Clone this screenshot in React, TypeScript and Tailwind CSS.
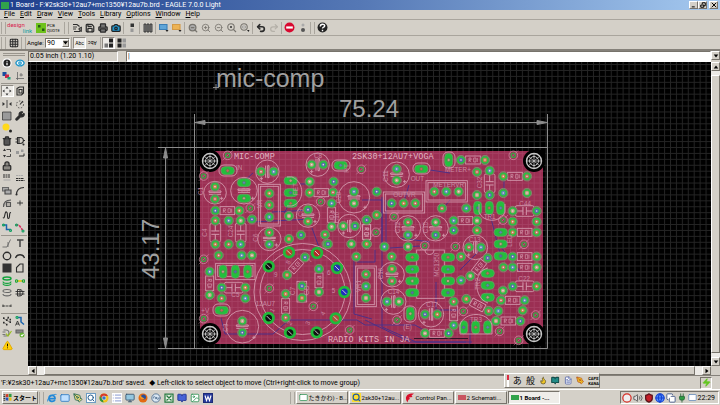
import type { ReactNode } from 'react';
import {
  Info, Eye, Trash2, Lock, Wrench, ZoomIn, ZoomOut, Search, Undo2, Redo2, Save, Printer,
  Grid3x3, Copy, TriangleAlert, Zap, Globe, Mail, FileText, Image, Disc3, List, Monitor, Camera,
  Ban, Shield, Volume2, Plug, PenTool, BookOpen, Flame,
} from 'lucide-react';

const RAISED = 'border border-t-white border-l-white border-r-[#77736b] border-b-[#77736b] bg-[#d4d0c8]';
const SUNKEN = 'border border-t-[#77736b] border-l-[#77736b] border-r-white border-b-white';

/* ---------- toolbar parts ---------- */

function Sep({ wide = false }: { wide?: boolean }) {
  return (
    <span className={wide ? 'flex w-[7px] shrink-0 justify-center gap-[3px]' : 'flex w-[3px] shrink-0 justify-center'}>
      <span className="h-3 w-px bg-[#aaa69e]" />
      {wide && <span className="h-3 w-px bg-[#aaa69e]" />}
    </span>
  );
}

function Tool({ label, pressed = false, children }: { label: string; pressed?: boolean; children: ReactNode }) {
  return (
    <button
      type="button"
      aria-label={label}
      className={`flex h-3 w-[13px] shrink-0 items-center justify-center ${pressed ? 'border border-[#8f8b84] border-r-white border-b-white bg-[#eceae6]' : ''}`}
    >
      {children}
    </button>
  );
}

function G({ children, size = 'size-[10px]' }: { children: ReactNode; size?: string }) {
  return (
    <svg viewBox="0 0 20 20" className={size} fill="none" stroke="#2c2c2c" strokeWidth="2.2">
      {children}
    </svg>
  );
}

const ic = 'size-[10px] text-[#2c2c2c]';
const dim = 'size-[10px] text-[#77746e]';

/* ---------- palette ---------- */

type Entry = [string, ReactNode, boolean?];

const paletteA: Entry[] = [
  ['Info', <Info className="size-[10px] fill-[#222] text-white" strokeWidth={3} />],
  ['Show', <Eye className="size-[10px] fill-white text-[#2196c9]" strokeWidth={3} />],
  ['Display', <G><path d="M1 2h8v8H1z" fill="#194fa0" stroke="none" /><path d="M6 7h8v7H6z" fill="#cc2448" stroke="none" /><path d="M11 12h6v5h-6z" fill="#1ba07a" stroke="none" /></G>],
  ['Mark', <G><path d="M5 2v16M2 15h16M12 4v7M9 8h7" stroke="#666" strokeWidth="1.6" /></G>],
];

const paletteB: Entry[] = [
  ['Move', <G><path d="M10 1l3 4H7zM10 19l3-4H7zM1 10l4-3v6zM19 10l-4-3v6z" fill="#333" stroke="none" /></G>, true],
  ['Copy', <G><path d="M4 5l5-3h8v12l-4 4H4zM8 7h6v7H8z" /></G>],
  ['Mirror', <G><path d="M10 2v16" strokeWidth="1.6" /><path d="M1 6l5 4-5 4zM19 6l-5 4 5 4z" fill="#333" stroke="none" /></G>],
  ['Rotate', <G><circle cx="10" cy="11" r="7" strokeDasharray="3 3" strokeWidth="1.5" /><path d="M10 11l6-7" /></G>],
  ['Group', <G><path d="M1 2h17v16H1z" fill="#9a9a9a" strokeWidth="1.4" /></G>],
  ['Change', <Wrench className="size-[10px] fill-[#2c2c2c] text-[#2c2c2c]" strokeWidth={3} />],
  ['Cut', <G><circle cx="8" cy="8" r="7" fill="#ffd91a" stroke="none" /><circle cx="17" cy="16" r="3" fill="#222" stroke="none" /></G>],
  ['', null],
  ['Delete', <Trash2 className="size-[10px] fill-[#555] text-[#2c2c2c]" strokeWidth={3} />],
  ['Add', <G><path d="M5 3h5c9 0 9 12 0 12H5zM1 6h4M1 12h4M17 9h3M8 3v12" /><circle cx="17" cy="17" r="1" /></G>],
  ['Pinswap', <G><path d="M9 3h8v5M9 17h8v-5" strokeWidth="1.6" /><path d="M5 1l3 5H2zM5 19l3-5H2z" fill="#333" stroke="none" /></G>],
  ['Replace', <G><path d="M2 6h6v6H2zM12 3h5v5h-5z" fill="#999" stroke="none" /><path d="M8 16h10v-5" strokeWidth="2" /></G>],
  ['Lock', <Lock className="size-[10px] fill-[#8b8983] text-[#2c2c2c]" strokeWidth={3} />],
  ['', null],
  ['Name', <G><path d="M2 4h15M2 8h15" strokeDasharray="4 1" /><path d="M3 14h14" stroke="#aaa" /></G>],
  ['Value', <G><path d="M2 5h14" stroke="#aaa" strokeDasharray="4 1" /><path d="M2 11h16M2 15h17" strokeDasharray="4 1" /></G>],
  ['Smash', <G><path d="M1 3h12v7H1z" fill="#aaa" stroke="#666" /><path d="M6 8h12v8H6z" fill="#aaa" stroke="#444" /></G>],
  ['Miter', <G><path d="M3 18C3 8 8 3 18 3" /><circle cx="3" cy="17" r="1" /></G>],
  ['Split', <G><path d="M3 18C3 8 8 4 18 4M9 17V9h8v8z" fill="#b5b1aa" stroke="#555" /></G>],
  ['Optimize', <G><path d="M4 10h12M10 5v10" strokeWidth="1.8" /></G>],
  ['Meander', <G><path d="M2 15C6 20 5 2 9 4s0 13 4 13 0-13 5-12" /></G>],
  ['', null],
  ['Route', <G><path d="M2 4h7v9h9" stroke="#1b64ad" strokeWidth="3" /><circle cx="3" cy="4" r="2" stroke="#12a060" /><circle cx="17" cy="15" r="2" stroke="#12a060" /></G>],
  ['Ripup', <G><path d="M2 4h6l7 10" stroke="#d8245a" strokeWidth="3" strokeDasharray="5 2" /><circle cx="3" cy="4" r="2" stroke="#12a060" /><circle cx="16" cy="16" r="2" stroke="#12a060" /></G>],
];

const paletteC: Entry[] = [
  ['Wire', <G><path d="M1 18h9l7-15M12 18V8" stroke="#666" strokeWidth="1.7" /></G>],
  ['Text', <G><path d="M4 4h13M10 4v14" stroke="#444" strokeWidth="3" /></G>],
  ['Circle', <G><circle cx="10" cy="10" r="7.5" strokeWidth="2.6" /></G>],
  ['Arc', <G><path d="M1 14c3-9 15-9 18 0" strokeWidth="3" /></G>],
  ['Rect', <G><path d="M1 1h18v18H1z" fill="#333" stroke="none" /></G>],
  ['Polygon', <G><path d="M3 18V9l7-7h6v16z" /></G>],
  ['Via', <G><ellipse cx="10" cy="5" rx="8" ry="3" stroke="#14a33d" strokeWidth="3" /><path d="M2 11c0 5 16 5 16 0M2 15c0 5 16 5 16 0" stroke="#14a33d" /></G>],
  ['Signal', <G><path d="M3 10h14" stroke="#e5c500" strokeWidth="3" /><circle cx="3" cy="10" r="2.5" stroke="#14a33d" /><circle cx="17" cy="10" r="2.5" stroke="#14a33d" /></G>],
  ['Hole', <G><ellipse cx="10" cy="6" rx="8" ry="3" stroke="#666" /><path d="M2 12c0 5 16 5 16 0" stroke="#666" /></G>],
  ['Attribute', <G><path d="M5 3h4c9 0 9 13 0 13H5zM1 7h18M1 12h18M10 3v13" strokeWidth="1.8" /></G>],
  ['Dimension', <G><path d="M1 10h18M2 7v6M18 7v6" strokeWidth="1.7" strokeDasharray="5 1" /></G>],
  ['', null],
];

const paletteD: Entry[] = [
  ['Ratsnest', <G><path d="M2 4h3M11 3h3M8 8h3M2 13h3M15 12h3M8 17h3M15 7h3" strokeWidth="3.5" /><path d="M4 5l5 4M12 4l-3 5M10 9l6 3M4 13l5 4" strokeWidth="1" /></G>],
  ['Autorouter', <G><path d="M6 3h6v9l6 5" stroke="#1b64ad" strokeWidth="3" /><circle cx="4" cy="3" r="2" stroke="#12a060" /><path d="M1 19l4-9 4 9M2 16h6" strokeWidth="1.7" /></G>],
  ['ERC', <G><path d="M3 4h5c8 0 8 12 0 12H3M1 8h6M1 13h6" stroke="#777" /><path d="M8 11l4 5 7-10" stroke="#9ac21c" /></G>],
  ['DRC', <G><path d="M2 4h14v6H2z" fill="#888" stroke="#666" /><circle cx="14" cy="14" r="5" fill="#64b333" stroke="none" /><path d="M12 14l2 2 3-4" stroke="#fff" /></G>],
  ['Errors', <TriangleAlert className="size-[11px] fill-[#ffcf08] text-[#e2a900] [&>path:not(:first-child)]:stroke-black" strokeWidth={2} />],
];

function PaletteGroup({ entries, height }: { entries: Entry[]; height: string }) {
  return (
    <div className={`grid auto-rows-fr grid-cols-2 items-center justify-items-center pr-px ${height}`}>
      {entries.map(([label, icon, on], i) =>
        label ? <Tool key={i} label={label} pressed={on}>{icon}</Tool> : <span key={i} />,
      )}
    </div>
  );
}

/* ---------- board drawing ---------- */

type P = [number, number];
type Quad = {
  at: P;
  pads: P[];
  vias: P[];
  wide: P[];
  tall: P[];
  caps: [number, number, number, boolean][];
  parts: [number, number, number][];
  film: [number, number, number][];
  boxes: [number, number, number, number][];
  labels: [number, number, string, number?][];
};

const quads: Quad[] = [
  {
    at: [190, 140],
    pads: [[213,95],[251,95],[365,74],[400,74],[75,140],[75,177],[492,155],[492,190],[354,209],[354,244],[238,278],[238,313],[460,258],[495,258],[238,160],[238,195],[238,231],[359,125],[431,125],[359,158],[429,157],[425,190],[425,260],[76,212],[148,212],[76,242],[116,242],[152,242],[186,238],[76,313],[116,313],[152,313],[297,228],[333,285],[297,297],[405,284],[410,312],[484,312],[530,240],[530,312]],
    vias: [[113,46],[41,108],[514,88],[392,185],[181,204]],
    wide: [[113,92],[452,76],[302,122],[302,158],[302,190],[162,128],[162,175]],
    tall: [],
    caps: [[232,95,35,true],[383,74,35,true],[75,158,34,false],[162,152,40,false],[492,172,47,false],[354,227,35,false],[238,297,35,false],[478,258,35,true]],
    parts: [[394,158,0],[425,225,90],[112,212,0],[530,276,90]],
    film: [[76,278,90],[152,278,90]],
    boxes: [[205,133,66,125],[211,139,54,113]],
    labels: [[138,90,'IN'],[40,165,'C1',-90],[154,160,'C2'],[216,205,'VR',-90],[325,165,'FET',-90],[454,190,'C20',-90],[372,54,'C8'],[478,98,'HT',-90],[338,230,'C9',-90],[50,290,'C4',-90],[128,292,'C24',-90],[205,305,'C6',-90],[448,250,'C10',-90]],
  },
  {
    at: [190, 240],
    pads: [[86,46],[155,46],[186,46],[345,52],[291,105],[499,50],[59,95],[59,165],[95,143],[166,143],[95,175],[166,175],[157,243],[157,278],[287,162],[287,233],[387,87],[387,156],[336,138],[336,174],[528,103],[528,139],[528,174],[414,12]],
    vias: [[238,145],[370,199],[479,270],[41,58],[41,236]],
    wide: [[95,211]],
    tall: [[99,95],[136,95],[173,95]],
    caps: [[157,260,49,false]],
    parts: [[59,130,90],[318,78,-48],[287,198,90],[387,121,90]],
    film: [[131,143,0]],
    boxes: [[77,70,118,49],[83,76,106,33],[321,124,29,62],[497,78,62,122],[503,84,50,110]],
    labels: [[197,197,'12AU7'],[34,220,'+V',0],[115,275,'C3',-90],[252,110,'9'],[298,75,'8',-60],[362,70,'7',-60],[411,105,'6'],[425,160,'5'],[402,228,'4',-60],[356,257,'3',-60],[302,257,'2',-60],[250,218,'1',-60],[314,165,'C7',-90],[358,165,'GD',-90],[514,157,'VR1',-90],[124,172,'C5']],
  },
  {
    at: [365, 140],
    pads: [[208,155],[244,155],[281,155],[80,190],[116,190],[151,190],[95,87],[95,121],[288,60],[360,60],[336,96],[374,92],[336,165],[374,165],[415,109],[486,109],[415,159],[486,159],[35,155],[35,225],[231,205],[304,205],[443,213],[515,213],[443,245],[515,245],[266,242],[336,242],[266,271],[336,271],[129,247],[129,285],[212,247],[212,285],[443,277],[515,277],[58,320],[129,320],[5,240],[5,312],[312,322],[348,322]],
    vias: [[445,46],[87,230],[414,240],[477,313],[271,320],[33,277],[179,317]],
    wide: [[169,87],[407,277],[407,312]],
    tall: [[251,60],[338,204],[373,204],[407,204]],
    caps: [[95,104,38,false],[129,265,38,false],[212,265,38,false],[331,322,37,true]],
    parts: [[324,60,0],[450,109,0],[301,242,0],[479,277,0],[5,276,90]],
    film: [[374,130,90],[479,213,0]],
    boxes: [[183,122,124,64],[189,128,112,52],[55,156,124,63],[61,162,112,51]],
    labels: [[240,97,'METER+'],[205,140,'METERVR'],[85,172,'OUTVR'],[137,123,'OUT'],[356,237,'TR1'],[463,197,'C44'],[70,125,'C11',-90],[104,280,'C12',-90],[190,280,'C15',-90],[312,305,'C13'],[350,145,'C32',-90],[440,320,'LED',-90]],
  },
  {
    at: [365, 240],
    pads: [[288,50],[288,121],[316,108],[368,54],[81,87],[81,123],[66,185],[102,185],[180,223],[217,223],[266,185],[266,256],[180,280],[251,280],[304,177],[371,213],[400,213],[393,243],[466,243],[473,211],[408,181],[479,181],[414,152],[443,139],[515,139],[415,82],[443,82],[515,82],[443,50],[515,50],[80,50]],
    vias: [[295,214],[96,240],[404,274],[461,301],[512,225]],
    wide: [[142,52],[142,88],[142,123],[142,158],[249,52],[249,88],[249,123],[249,158],[368,100],[368,136],[368,172],[407,48]],
    tall: [[136,221],[296,262],[332,262],[368,262]],
    caps: [[81,104,37,false],[85,185,38,true],[198,223,38,true]],
    parts: [[266,220,90],[216,280,0],[342,81,-52],[338,195,28],[430,243,0],[443,181,0],[479,82,0],[479,50,0]],
    film: [[479,139,0]],
    boxes: [[155,30,83,145]],
    labels: [[221,110,'MC1350',-90],[115,268,'(E)'],[68,162,'C14'],[55,118,'C16',-90],[184,200,'C17'],[315,245,'TR3'],[344,150,'TR2',-90],[460,122,'C22']],
  },
];

const tube: [number, number, string][] = [
  [297,37,'#b3402e'],[381,39,'#b52a2a'],[441,84,'#2632b0'],[463,156,'#1e2dc0'],[437,235,'#b0503a'],[380,277,'#111'],[300,278,'#111'],[236,234,'#111'],[236,79,'#111'],
];

const SILK = '#d49aae';
const centres = ['#c26a60', '#5f86b8', '#c0a088', '#5868b0', '#c87a50'];
const corners: P[] = [[210, 161], [534, 161], [210, 334], [534, 334]];

function Quadrant({ q }: { q: Quad }) {
  return (
    <g transform={`translate(${q.at[0]} ${q.at[1]}) scale(0.3333)`} fill="none" stroke={SILK} strokeWidth="2.6">
      {q.boxes.map(([x, y, w, h], i) => <rect key={i} x={x} y={y} width={w} height={h} />)}
      {q.caps.map(([x, y, r, flat], i) => (
        <g key={i} transform={`translate(${x} ${y}) rotate(${flat ? 90 : 0})`}>
          <circle r={r} />
          <path d="M-18 -5h36v4h-36zM-18 5h36" strokeWidth="3" />
          <path d={`M${r - 14} ${r - 22}v10m-5 -5h10`} />
        </g>
      ))}
      {q.parts.map(([x, y, a], i) => (
        <g key={i} transform={`translate(${x} ${y}) rotate(${a})`}>
          <path d="M-36 0h14M22 0h14" />
          <rect x="-22" y="-12" width="44" height="24" />
          <path d="M-12 6v-12h6v6h-6l7 6M2 -6h7v12h-7zM13 -6v12" strokeWidth="2" />
        </g>
      ))}
      {q.film.map(([x, y, a], i) => (
        <g key={i} transform={`translate(${x} ${y}) rotate(${a})`}>
          <rect x="-28" y="-16" width="56" height="32" rx="5" />
          <path d="M-34 0h29M5 0h29M-5 -12v24M5 -12v24" strokeWidth="3" />
        </g>
      ))}
      {q.vias.map(([x, y], i) => (
        <g key={i}>
          <circle cx={x} cy={y} r="13" strokeWidth="2" />
          <path d={`M${x - 15} ${y + 15}l30-30`} strokeWidth="1.5" />
          <circle cx={x} cy={y} r="6.5" stroke="#3fa146" strokeWidth="4" />
        </g>
      ))}
      {q.pads.map(([x, y], i) => (
        <g key={i}>
          <circle cx={x} cy={y} r="14" fill="#8a5a66" stroke="#7aa570" strokeWidth="2" />
          <circle cx={x} cy={y} r="9" fill={centres[i % 5]} stroke="#2bc043" strokeWidth="5" />
          <circle cx={x} cy={y} r="2.5" fill="#e6dad4" stroke="none" />
        </g>
      ))}
      {q.wide.map(([x, y], i) => (
        <g key={i}>
          <rect x={x - 20} y={y - 12} width="40" height="24" rx="12" fill="#22c03c" stroke="#6b9a66" strokeWidth="2.5" />
          <circle cx={x} cy={y} r="5" fill={centres[i % 4]} stroke="#4d8a4c" />
        </g>
      ))}
      {q.tall.map(([x, y], i) => (
        <g key={i}>
          <rect x={x - 12} y={y - 20} width="24" height="40" rx="12" fill="#22c03c" stroke="#6b9a66" strokeWidth="2.5" />
          <circle cx={x} cy={y} r="5" fill={centres[(i + 2) % 4]} stroke="#4d8a4c" />
        </g>
      ))}
      {q.labels.map(([x, y, t, a = 0], i) => (
        <text key={i} transform={`translate(${x} ${y}) rotate(${a})`} fill="#c98aa2" stroke="none" fontSize="19">{t}</text>
      ))}
    </g>
  );
}

function Board() {
  return (
    <svg viewBox="28 62 683 304" preserveAspectRatio="xMidYMid slice" className="block h-full w-full bg-black font-['Liberation_Sans',sans-serif]" role="img" aria-label="mic-comp board">
      <defs>
        <pattern id="grid" x="196" y="147" width="5.925" height="5.925" patternUnits="userSpaceOnUse">
          <path d="M0 .5H6M.5 0V6" stroke="#242424" strokeWidth="1" />
        </pattern>
        <pattern id="boardgrid" x="196" y="147" width="5.925" height="5.925" patternUnits="userSpaceOnUse">
          <path d="M0 .5H6M.5 0V6" stroke="#c06a88" strokeWidth=".8" opacity=".3" />
        </pattern>
      </defs>
      <rect x="28" y="62" width="683" height="304" fill="url(#grid)" />

      <g stroke="#8c8c8c" fill="none" strokeWidth="1">
        <path d="M194.500 114V348.500M547.500 114V348.500M158 147.500H547.500M158 348.500H547.500M195 122.500H547M165.500 148V348M213 87.500h6M216 84v6" />
        <path d="M195 122.500l10-2v4zM547 122.500l-10-2v4zM165.500 148l-2 10h4zM165.500 348l-2-10h4z" fill="#8c8c8c" />
      </g>
      <g fill="#a0a0a0">
        <text x="216" y="87" fontSize="25">mic-comp</text>
        <text x="369" y="117" fontSize="24" textAnchor="middle">75.24</text>
        <text transform="translate(159 249) rotate(-90)" fontSize="24" textAnchor="middle">43.17</text>
      </g>

      <rect x="200" y="151" width="343" height="193" fill="#9b2f53" />
      <rect x="200" y="151" width="343" height="193" fill="url(#boardgrid)" />
      {corners.map(([x, y]) => {
        const left = x < 300;
        const top = y < 250;
        return (
          <g key={`${x}-${y}`}>
            <rect x={left ? 199 : x} y={top ? 150 : y} width="11" height="12" fill="#000" />
            <circle cx={x} cy={y} r="11" fill="#000" />
            <g stroke="#c8c8c8" fill="none">
              <circle cx={x} cy={y} r="7.500" strokeWidth="1.4" />
              <circle cx={x} cy={y} r="4.500" strokeWidth="1" />
              <path d={`M${x - 6} ${y - 5}l12 10M${x + 6} ${y - 5}l-12 10M${x} ${y - 7}v14M${x - 7} ${y}h14`} strokeWidth=".8" />
            </g>
          </g>
        );
      })}

      <g stroke="#43308c" fill="none" strokeWidth=".9">
        <path d="M243 182l10-9M300 184h12M362 200h20v46M290 203l-6 10M312 228l8 22M240 218l12 4 60-3M272 212l40-2" />
        <path d="M221 318l4 16h48l16-14h68l8 5h50l14 8M354 257v57l18 5M357 262h18v-12" />
        <path d="M382 197v130l34 15h50M386 200v50M450 200l-8 10M504 176v16M430 170l20 3M400 238l30 4M420 246l-30 2" />
        <path d="M365 320l45 22h62M436 282v28h22M480 250l-20 20M500 246l20 25M470 320v24M409 185l-6 20M490 214l10 40" />
      </g>
      <path d="M414 338.500h54" stroke="#301528" fill="none" />

      {quads.map((q, i) => <Quadrant key={i} q={q} />)}

      <g fill="none" stroke={SILK} strokeWidth=".9">
        <circle cx="302.500" cy="292" r="48.500" />
        <circle cx="302.500" cy="292" r="42.500" />
        <path d="M287 177h5c13 5 13 25 0 29h-5M479 204v8c4 11 22 11 26 0v-8M488 268c-15 3-15 30 0 35M460 325c4-14 28-14 32 0v9h-32z" />
        <path d="M425 250c0 6 9 6 9 0" />
        <rect x="219" y="165" width="18" height="11" rx="5" />
        <rect x="332" y="160" width="18" height="11" rx="5" />
        <rect x="413" y="163" width="17" height="11" rx="5" />
        <rect x="213" y="304" width="17" height="12" rx="5" />
        <rect x="404" y="306" width="12" height="16" rx="5" />
        <rect x="443" y="152" width="12" height="16" rx="5" />
      </g>
      {tube.map(([x, y, c]) => (
        <g key={`${x}-${y}`} transform={`translate(${190 + x / 3} ${240 + y / 3})`}>
          <circle r="4.800" fill={c} stroke="#22b93b" strokeWidth="2.800" />
          <path d="M-2 -2l4 4" stroke="#ddd" strokeWidth=".9" />
        </g>
      ))}

      <g className="font-['Liberation_Mono',monospace]" fill="#e0b4c2" fontSize="8.500">
        <text x="234" y="158.500">MIC-COMP</text>
        <text x="352" y="158.500">2SK30+12AU7+VOGA</text>
        <text x="328" y="341.500">RADIO KITS IN JA</text>
      </g>
    </svg>
  );
}

/* ---------- window ---------- */

const menus = ['File', 'Edit', 'Draw', 'View', 'Tools', 'Library', 'Options', 'Window', 'Help'];

function CapButton({ label, children }: { label: string; children: ReactNode }) {
  return (
    <button type="button" aria-label={label} className={`flex h-2 w-[9px] items-center justify-center ${RAISED}`}>
      <svg viewBox="0 0 8 8" className="size-[6px]" stroke="#000" strokeWidth="1.3" fill="none">{children}</svg>
    </button>
  );
}

function Arrow({ dir, label }: { dir: 'up' | 'down' | 'left' | 'right'; label: string }) {
  const d = { up: 'M1 6h6L4 2z', down: 'M1 2h6L4 6z', left: 'M6 1v6L2 4z', right: 'M2 1v6l4-3z' }[dir];
  return (
    <button type="button" aria-label={label} className={`flex size-[9px] shrink-0 items-center justify-center ${RAISED}`}>
      <svg viewBox="0 0 8 8" className="size-[6px]"><path d={d} /></svg>
    </button>
  );
}

const q = 'size-[10px]';
const quick: [string, ReactNode][] = [
  ['Internet', <svg viewBox="0 0 20 20" className={q} fill="none" stroke="#2188d8" strokeWidth="3.5"><path d="M4 11h12c0-9-12-8-12 0 0 7 9 7 12 3" /><path d="M1 17C0 10 12 1 19 3" strokeWidth="1.6" /></svg>],
  ['Mail', <Mail className={`${q} fill-[#bfe0ff] text-[#2a79c4]`} />],
  ['Desktop', <PenTool className={`${q} fill-[#e9d77c] text-[#226654]`} />],
  ['Viewer', <Search className={`${q} border border-[#6d9cc4] bg-white text-[#285c8c]`} strokeWidth={3} />],
  ['Chrome', <svg viewBox="0 0 20 20" className={q}><circle cx="10" cy="10" r="9" fill="#f0c21c" /><path d="M2 6a9 9 0 0 1 16 0h-8l-4 6z" fill="#d63a2c" /><path d="M2 6l6 8 1 5A9 9 0 0 1 2 6z" fill="#31933e" /><circle cx="10" cy="10" r="4" fill="#3474c9" stroke="#fff" /></svg>],
  ['List', <List className={`${q} bg-white text-[#7186c9]`} />],
  ['Computer', <Monitor className={`${q} fill-[#94c7df] text-[#34516b]`} />],
  ['Firefox', <svg viewBox="0 0 20 20" className={q}><circle cx="10" cy="10" r="9" fill="#e36a12" /><circle cx="11" cy="8" r="5" fill="#294f9c" /><path d="M3 4c4 1 4 6 10 6-3 5-9 3-10-6z" fill="#f59a23" /></svg>],
  ['Disc', <Disc3 className={`${q} fill-[#dbe8f4] text-[#4c6a8b]`} />],
  ['Spreadsheet', <svg viewBox="0 0 20 20" className={q} stroke="#287b42" strokeWidth="2.5" fill="#e6f1e3"><path d="M2 2h16v16H2zM5 5l10 10M15 5L5 15" /></svg>],
  ['Book', <BookOpen className={`${q} fill-[#4662d6] text-[#1c2f8f]`} />],
  ['Image', <Image className={`${q} fill-white text-[#309356]`} />],
  ['Writer', <svg viewBox="0 0 20 20" className={q} stroke="#fff" strokeWidth="2.2" fill="#2b3d9e"><path d="M1 1h18v18H1z" stroke="#1c2a77" /><path d="M4 5l3 10 3-8 3 8 3-10" fill="none" /></svg>],
];

function Task({ icon, text, active = false }: { icon: ReactNode; text: string; active?: boolean }) {
  return (
    <button type="button" className={`flex h-[13px] w-[52px] shrink-0 items-center gap-px pl-0.5 text-[6px] whitespace-nowrap ${active ? `${SUNKEN} bg-[#efede9] font-bold` : RAISED}`}>
      {icon}
      <span>{text}</span>
    </button>
  );
}

const chip = (color: string) => <span className={`h-[5px] w-2 shrink-0 ${color}`} />;

export default function App() {
  return (
    <div className="relative flex h-screen w-full flex-col overflow-hidden bg-[#d4d0c8] font-[Roboto,'Noto_Sans_CJK_JP',sans-serif] text-[7px] leading-[10px] text-black">
      <header className="flex h-[10px] shrink-0 items-center bg-linear-to-r from-[#1f3f8c] via-[#5578b5] to-[#a6caf0] pr-0.5 pl-px text-white">
        <span className="mr-px h-[7px] w-2 bg-[#31a34b]" />
        <h1 className="flex-1 whitespace-pre">1 Board - F:¥2sk30+12au7+mc1350¥12au7b.brd - EAGLE 7.0.0 Light</h1>
        <CapButton label="Minimize"><path d="M1 6.500h4" /></CapButton>
        <CapButton label="Restore"><path d="M1 4h4v3H1zM3 3V1h4v4H5" /></CapButton>
        <span className="w-0.5" />
        <CapButton label="Close"><path d="M1 1l6 6M7 1L1 7" /></CapButton>
      </header>

      <nav className="flex h-[10px] shrink-0 items-center gap-[5px] border-b border-[#a9a59d] pl-1">
        {menus.map((m) => (
          <button type="button" key={m} className="leading-[9px]"><u>{m[0]}</u>{m.slice(1)}</button>
        ))}
      </nav>

      <div role="toolbar" className="flex h-4 shrink-0 items-center border-b border-[#a9a59d]">
        <Sep wide />
        <button type="button" className="flex h-3 w-[25px] shrink-0 flex-col text-left text-[6px] leading-[6px]">
          <span className="text-[#d8204c]">design</span>
          <span className="self-end text-[#0a9c9c]">link</span>
        </button>
        <button type="button" className="ml-1 flex h-3 w-[22px] shrink-0 items-center gap-px text-left text-[4px] leading-[5px]">
          <svg viewBox="0 0 20 20" className="size-[10px] shrink-0" fill="#6fc21d"><path d="M0 0h20v20H0z" /><path d="M4 4h5v5H4zM12 11h5v5h-5z" fill="#275b16" /></svg>
          <span>PCB<br />QUOTE</span>
        </button>
        <span className="w-[5px] shrink-0" />
        <Sep wide />
        <Tool label="Open"><G><path d="M2 3h8l5 4M4 17h12V9" /><path d="M13 12l6-4v9zM2 8h8M2 12h6" strokeWidth="1.7" /></G></Tool>
        <Tool label="Save"><Save className={ic} strokeWidth={3} /></Tool>
        <Tool label="Print"><Printer className="size-[10px] fill-[#777] text-[#2c2c2c]" strokeWidth={3} /></Tool>
        <Tool label="CAM"><Camera className="size-[10px] fill-[#2399d1] text-[#222]" strokeWidth={3} /></Tool>
        <Sep />
        <Tool label="Board"><G><path d="M7 1h7v7H7z" fill="#333" stroke="none" /><path d="M7 11h6v7H7z" fill="#999" stroke="none" /></G></Tool>
        <Sep />
        <Tool label="Use"><G><path d="M2 2h4v16H2zM8 2h4v16H8zM14 2h4v16h-4z" fill="#888" strokeWidth="1.7" /></G></Tool>
        <Sep />
        <Tool label="Script"><G><path d="M1 3h15v10H1z" fill="#5ea5d8" stroke="#3b7eb5" /><path d="M13 14h6l-3 4z" fill="#222" stroke="none" /></G></Tool>
        <Tool label="Run"><G><path d="M1 3h15v10H1z" fill="#edb354" stroke="#d49a45" /><path d="M13 14h6l-3 4z" fill="#222" stroke="none" /></G></Tool>
        <Sep />
        <Tool label="Zoom fit"><ZoomOut className={`${dim} fill-[#aaa]`} strokeWidth={3} /></Tool>
        <Tool label="Zoom in"><ZoomIn className={dim} strokeWidth={2} /></Tool>
        <Tool label="Zoom out"><ZoomOut className={dim} strokeWidth={2} /></Tool>
        <Tool label="Redraw"><G><circle cx="8" cy="8" r="6.500" stroke="#77746e" /><circle cx="8" cy="8" r="2" fill="#333" stroke="none" /><path d="M13 13l5 5" stroke="#77746e" /></G></Tool>
        <Tool label="Zoom select"><G><circle cx="8" cy="8" r="6.500" stroke="#77746e" /><path d="M5 6h6v4H5z" stroke="#999" strokeWidth="1.5" /><path d="M14 14h5l-2 4z" fill="#222" stroke="none" /></G></Tool>
        <Sep />
        <Tool label="Undo"><Undo2 className={ic} strokeWidth={4} /></Tool>
        <Tool label="Redo"><Redo2 className="size-[10px] text-[#b4b0a8]" strokeWidth={3} /></Tool>
        <Sep />
        <Tool label="Stop"><G size="size-[11px]"><circle cx="10" cy="10" r="9" fill="#d8082f" stroke="none" /><path d="M4 10h12" stroke="#fff" strokeWidth="4" /></G></Tool>
        <Tool label="Go"><G><circle cx="10" cy="4" r="3" fill="#aaa" stroke="none" /><circle cx="10" cy="14" r="4" fill="#555" stroke="none" /></G></Tool>
        <Sep wide />
        <Tool label="Help"><G size="size-[11px]"><circle cx="10" cy="10" r="9" fill="#222" stroke="none" /><path d="M6 8c0-5 8-5 8-1 0 3-4 2-4 5M10 14v3" stroke="#fff" strokeWidth="2.600" /></G></Tool>
      </div>

      <div className="flex h-[15px] shrink-0 items-center border-b-2 border-[#85817a]">
        <Sep wide />
        <Tool label="Grid"><Grid3x3 className={ic} strokeWidth={2.5} /></Tool>
        <Sep wide />
        <label htmlFor="angle" className="w-4 shrink-0 text-[6px]">Angle:</label>
        <div className="relative ml-0.5 h-[10px] w-[25px] shrink-0">
          <select id="angle" defaultValue="90" className={`block h-[10px] w-full appearance-none bg-white pl-px text-[7px] leading-[8px] ${SUNKEN}`}>
            <option>90</option>
          </select>
          <span className={`pointer-events-none absolute top-px right-px flex h-2 w-[7px] items-center justify-center ${RAISED}`}>
            <svg viewBox="0 0 8 8" className="size-[5px]"><path d="M0 2h8L4 7z" /></svg>
          </span>
        </div>
        <Sep />
        <Tool label="Normal text" pressed><span className="text-[5px] leading-[6px]">Abc</span></Tool>
        <Tool label="Spin text"><span className="rotate-180 text-[5px] leading-[6px]">Abc</span></Tool>
        <Sep />
        <Tool label="Align left" pressed><G><path d="M10 1h8v8h-8zM10 11h8v8h-8z" fill="#222" stroke="none" /><path d="M1 11h7v8H1z" fill="#777" stroke="none" /></G></Tool>
        <Tool label="Align right"><G><path d="M1 1h8v8H1zM1 11h8v8H1z" fill="#222" stroke="none" /><path d="M11 1h7v8h-7zM11 11h7v8h-7z" fill="#999" stroke="none" /></G></Tool>
      </div>

      <main className="flex min-h-0 flex-1">
        <aside className="flex w-7 shrink-0 flex-col px-px">
          <div className="mx-0.5 mt-0.5 mb-px h-[3px] border-y border-[#99958d]" />
          <PaletteGroup entries={paletteA} height="h-[25px]" />
          <hr className="my-px border-[#99958d]" />
          <PaletteGroup entries={paletteB} height="h-[149px]" />
          <hr className="my-px border-[#99958d]" />
          <PaletteGroup entries={paletteC} height="h-[75px]" />
          <hr className="my-px border-[#99958d]" />
          <PaletteGroup entries={paletteD} height="h-[37px]" />
        </aside>

        <section className="flex min-w-0 flex-1 flex-col">
          <div className="flex h-[11px] shrink-0">
            <output className={`w-[90px] shrink-0 pl-px leading-[9px] whitespace-nowrap ${SUNKEN}`}>0.05 inch (1.20 1.10)</output>
            <span className="w-2 shrink-0" />
            <input aria-label="Command line" defaultValue="|" className={`min-w-0 flex-1 bg-white px-px leading-[9px] ${SUNKEN}`} />
            <Arrow dir="down" label="Command history" />
          </div>
          <div className="flex min-h-0 flex-1">
            <div className="min-w-0 flex-1"><Board /></div>
            <div className="flex w-[9px] shrink-0 flex-col">
              <Arrow dir="up" label="Scroll up" />
              <div className="h-1 bg-[#eceae6]" />
              <div className={`flex-1 ${RAISED}`} />
              <div className="h-1 bg-[#eceae6]" />
              <Arrow dir="down" label="Scroll down" />
            </div>
          </div>
          <div className="flex h-[9px] shrink-0 pr-[9px]">
            <Arrow dir="left" label="Scroll left" />
            <div className="w-[7px] bg-[#eceae6]" />
            <div className={`flex-1 ${RAISED}`} />
            <div className="w-[7px] bg-[#eceae6]" />
            <Arrow dir="right" label="Scroll right" />
          </div>
        </section>
      </main>

      <footer className="shrink-0">
        <div className="flex h-[14px] items-center border-t border-[#85817a] pr-2 pl-px">
          <p className="flex-1 whitespace-pre">'F:¥2sk30+12au7+mc1350¥12au7b.brd' saved.  <span className="text-[6px]">◆</span> Left-click to select object to move (Ctrl+right-click to move group)</p>
          <span className={`flex h-3 w-3 items-center justify-center ${SUNKEN}`}>
            <Zap className="size-[9px] fill-[#63c522] text-[#63c522]" />
          </span>
        </div>
        <div className="flex h-4 items-center border-t border-white pl-0.5">
          <button type="button" className={`flex h-[13px] w-9 shrink-0 items-center gap-px font-bold whitespace-nowrap ${RAISED}`}>
            <svg viewBox="0 0 20 20" className="size-[9px] shrink-0"><path d="M6 3l6-1v7H6z" fill="#d33a24" /><path d="M13 2h6v7h-6z" fill="#2e9d3f" /><path d="M6 10h6v7l-6-1z" fill="#2851ba" /><path d="M13 10h6v7h-6z" fill="#e5be1d" /><path d="M1 4h4M1 8h4M1 12h4M1 16h4" stroke="#111" strokeWidth="2" /></svg>
            <span className="text-[6px]">スタート</span>
          </button>
          <Sep wide />
          {quick.map(([label, icon]) => <Tool key={label} label={label}>{icon}</Tool>)}
          <span className="min-w-0 grow-[74]" />
          <Sep wide />
          <div className="flex gap-px">
            <Task icon={<Mail className="size-[9px] shrink-0 fill-white text-[#309356]" />} text="たきかわ) - B..." />
            <Task icon={<Search className="size-[9px] shrink-0 bg-[#ffdd30] text-[#215aa0]" strokeWidth={3} />} text="2sk30+12au..." />
            <Task icon={<svg viewBox="0 0 20 20" className="size-[10px] shrink-0" fill="#d80f2a"><path d="M18 1C3 0-2 9 5 19c1-4 1-6 5-7l-2-3 7-1-2-3z" /></svg>} text="Control Pan..." />
            <Task icon={chip('bg-[#c95560]')} text="2 Schemati..." />
            <Task icon={chip('bg-[#31a34b]')} text="1 Board -..." active />
          </div>
          <span className="min-w-0 grow-[60]" />
          <div className={`mr-px flex h-[13px] w-[99px] shrink-0 items-center gap-px px-px ${SUNKEN}`}>
            <Ban className="size-[10px] fill-[#eee] text-[#d62d24]" strokeWidth={3} />
            <Volume2 className="size-[10px] fill-[#ddd] text-[#444]" />
            <Shield className="size-[10px] fill-[#c41f28] text-[#5a1218]" strokeWidth={3} />
            <Globe className="size-[10px] fill-[#5795ff] text-[#1543d4]" strokeWidth={3} />
            <Copy className="size-[10px] fill-white text-[#334b80]" />
            <Plug className="size-[10px] fill-[#2f9c44] text-[#276236]" />
            <Mail className="size-[9px] fill-white text-[#5b83b6]" />
            <time className="mr-0.5 ml-auto">22:29</time>
          </div>
        </div>
      </footer>

      <div role="toolbar" aria-label="Input method" className={`absolute bottom-[17px] left-[70%] flex h-[15px] w-24 items-center gap-1 pl-0.5 ${RAISED}`}>
        <span className="h-3 w-0.5 bg-linear-to-b from-[#dc2b42] from-40% to-white to-40%" />
        <button type="button" className="text-[9px]">あ</button>
        <button type="button" className="text-[9px]">般</button>
        <Flame className="size-[9px] fill-[#f0c627] text-[#54471a]" />
        <BookOpen className="size-[9px] fill-[#218b87] text-[#15504e]" strokeWidth={3} />
        <FileText className="size-[9px] fill-white text-[#354a9c]" />
        <PenTool className="size-[9px] fill-[#f3cc26] text-[#b54b1b]" />
        <span className="text-[4px] leading-[5px] font-bold">CAPS<br />KANA</span>
      </div>
    </div>
  );
}
